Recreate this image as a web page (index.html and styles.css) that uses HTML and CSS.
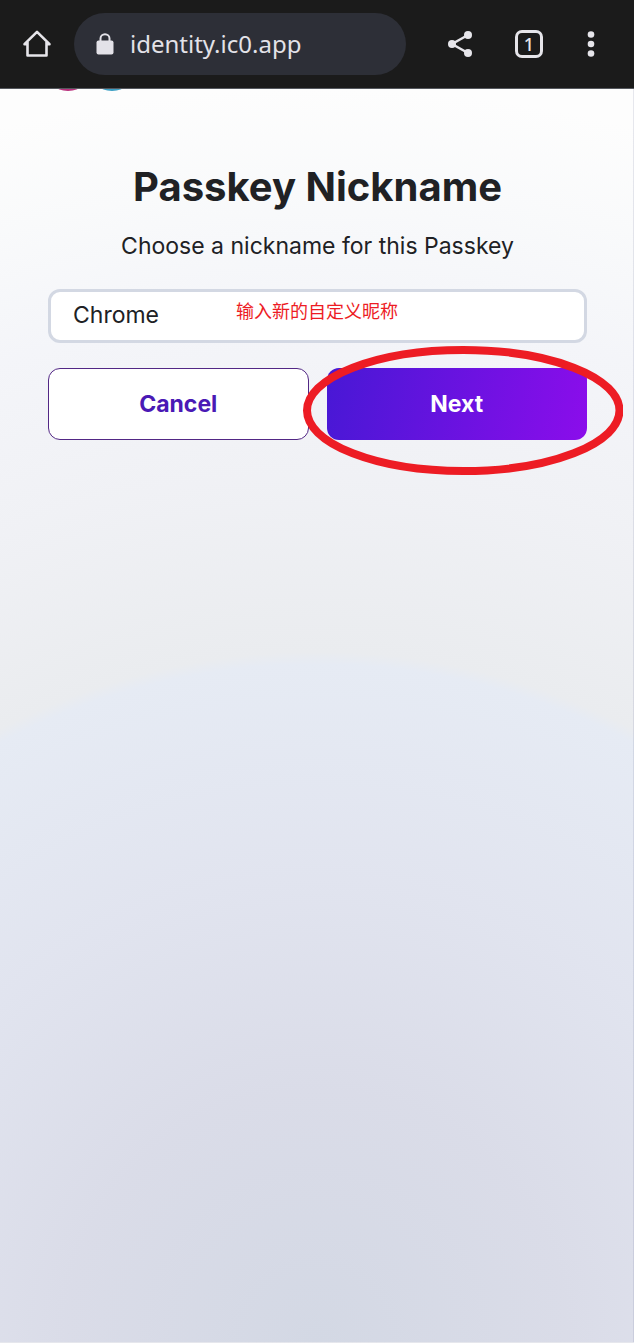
FILE: index.html
```html
<!DOCTYPE html>
<html lang="en">
<head>
<meta charset="utf-8">
<meta name="viewport" content="width=device-width, initial-scale=1">
<title>Passkey Nickname</title>
<link rel="stylesheet" href="styles.css">
</head>
<body>
<header class="browser-bar">
  <button class="icon-button" type="button" aria-label="Home">
    <svg width="30" height="30" viewBox="0 0 30 30" fill="none" stroke="#e6e5ea" stroke-width="2.6" stroke-linejoin="round" stroke-linecap="round"><path d="M2.5 15.2 15 2.8 27.500 15.200M5.500 13V26.500H24.500V13M2.500 15.200H5.500M24.500 15.200H27.500"/></svg>
  </button>
  <div class="address">
    <svg width="18" height="22" viewBox="0 0 18 22" fill="none"><rect x="0.500" y="7.500" width="17" height="14" rx="2" fill="#e3e2e8"/><path d="M4.500 8V5.500a4.500 4.300 0 0 1 9 0V8" stroke="#e3e2e8" stroke-width="2"/></svg>
    <span>identity.ic0.app</span>
  </div>
  <div class="actions">
    <button class="icon-button" type="button" aria-label="Share">
      <svg width="26" height="28" viewBox="0 0 26 28"><path d="M21 5 5 14l16 9" fill="none" stroke="#e6e5ea" stroke-width="2.500"/><g fill="#e6e5ea"><circle cx="21" cy="5" r="4"/><circle cx="5" cy="14" r="4"/><circle cx="21" cy="23" r="4"/></g></svg>
    </button>
    <button class="icon-button tabs" type="button" aria-label="Tabs">1</button>
    <button class="icon-button" type="button" aria-label="More options">
      <svg width="12" height="26" viewBox="0 0 12 26" fill="#e6e5ea"><circle cx="6" cy="3.500" r="3.300"/><circle cx="6" cy="13" r="3.300"/><circle cx="6" cy="22.500" r="3.300"/></svg>
    </button>
  </div>
</header>
<main class="page">
  <svg class="logo-edge" width="72" height="3" viewBox="0 0 72 3"><ellipse cx="12" cy="-3" rx="12" ry="5" fill="#b8317c"/><ellipse cx="56" cy="-3" rx="12" ry="5" fill="#3c9fc4"/></svg>
  <h1 class="title">Passkey Nickname</h1>
  <p class="lead"><label for="nickname">Choose a nickname for this Passkey</label></p>
  <form class="form">
    <div class="field">
      <input class="input" id="nickname" type="text" value="Chrome">
      <span class="note" lang="zh-CN">输入新的自定义昵称</span>
    </div>
    <div class="buttons">
      <button class="button secondary" type="button">Cancel</button>
      <div class="marked">
        <button class="button primary" type="button">Next</button>
        <svg class="ring" viewBox="0 0 320 129" preserveAspectRatio="none"><ellipse cx="160" cy="64.500" rx="156" ry="60.500" fill="none" stroke="#ed1c24" stroke-width="8"/></svg>
      </div>
    </div>
  </form>
</main>
</body>
</html>
```
FILE: styles.css
```css
* {
  box-sizing: border-box;
}

body {
  margin: 0;
  min-height: 100vh;
  display: flex;
  flex-direction: column;
  font-family: Inter, "Noto Sans CJK SC", sans-serif;
  color: #202124;
}

.browser-bar {
  display: flex;
  align-items: center;
  height: 89px;
  padding: 0 37px 1px 22px;
  background: #1b1b1b;
  border-bottom: 1px solid #55585e;
}

.icon-button {
  display: flex;
  align-items: center;
  justify-content: center;
  padding: 0;
  border: 0;
  background: none;
  color: #e6e5ea;
}

.address {
  display: flex;
  flex: 1;
  align-items: center;
  gap: 16px;
  height: 62px;
  margin: 0 41px 0 22px;
  padding: 0 22px;
  border-radius: 31px;
  background: #2d2f37;
  color: #e3e2e8;
  font: 24px/32px "Noto Sans", sans-serif;
}

.actions {
  display: flex;
  align-items: center;
  gap: 42px;
}

.tabs {
  width: 28px;
  height: 28px;
  border: 3px solid #e6e5ea;
  border-radius: 7px;
  font: 500 18px/20px "Noto Sans", sans-serif;
}

.page {
  position: relative;
  flex: 1;
  padding: 73px 46px 48px 48px;
  border: solid rgba(100, 110, 150, 0.15);
  border-width: 0 1px 1px 0;
  background: radial-gradient(circle 1255px at 50% 100%, #d3d8e4 0%, #dadce8 20%, #e1e4ef 37%, #e6ebf4 54%, #eaecef 55%, #f0f1f5 69%, #f4f5f9 82%, #f9fafb 92%, #fdfdfd 100%);
}

.logo-edge {
  position: absolute;
  top: 0;
  left: 56px;
}

.title {
  margin: 0;
  font-size: 40px;
  line-height: 50px;
  font-weight: 700;
  text-align: center;
}

.lead {
  margin: 18px 0 27px;
  font-size: 23px;
  line-height: 32px;
  text-align: center;
}

.field {
  position: relative;
}

.input {
  display: block;
  width: 100%;
  height: 54px;
  padding: 0 22px 2px;
  border: 3px solid #d3d8e3;
  border-radius: 12px;
  background: #fff;
  color: #202124;
  font: 23px/32px Inter, sans-serif;
}

.note {
  position: absolute;
  top: 9px;
  left: 188px;
  color: #ed1c24;
  font: 18px/24px "Noto Sans CJK SC", sans-serif;
  pointer-events: none;
}

.buttons {
  display: grid;
  grid-template-columns: 1fr 1fr;
  gap: 18px;
  margin-top: 25px;
}

.button {
  width: 100%;
  height: 72px;
  padding: 0;
  border-radius: 12px;
  font: 700 23px/32px Inter, sans-serif;
}

.secondary {
  border: 1px solid #522785;
  background: #fff;
  color: #4a19b5;
}

.primary {
  border: 0;
  background: linear-gradient(100deg, #4818d5, #8b0deb);
  color: #fff;
}

.marked {
  position: relative;
}

.ring {
  position: absolute;
  top: -22px;
  left: -24px;
  width: calc(100% + 60px);
  height: 129px;
  pointer-events: none;
}
```
